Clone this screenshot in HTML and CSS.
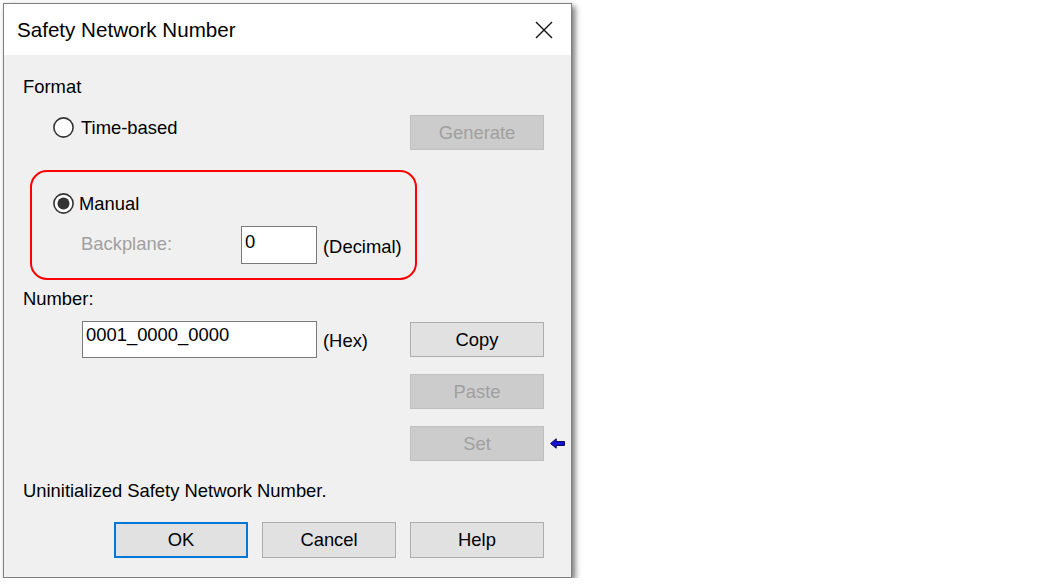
FILE: index.html
```html
<!DOCTYPE html>
<html lang="en">
<head>
    <meta charset="UTF-8">
    <meta name="viewport" content="width=device-width, initial-scale=1.0">
    <title>Safety Network Number</title>
    <link rel="stylesheet" href="styles.css">
</head>
<body>
    <div class="dialog">
        <div class="titlebar">
            <span class="title">Safety Network Number</span>
            <svg class="close" viewBox="0 0 18 18">
                <path d="M1 1 L17 17 M17 1 L1 17" stroke="#111" stroke-width="1.4" fill="none"/>
            </svg>
        </div>

        <div class="content">
            <div class="label">Format</div>

            <div class="time-row">
                <label class="radio">
                    <svg class="radio-icon" viewBox="0 0 21 21">
                        <circle cx="10.5" cy="10.5" r="9.6" fill="#fff" stroke="#333" stroke-width="1.6"/>
                    </svg>
                    Time-based
                </label>
                <button class="btn" disabled>Generate</button>
            </div>

            <div class="manual-box">
                <label class="radio">
                    <svg class="radio-icon" viewBox="0 0 21 21">
                        <circle cx="10.5" cy="10.5" r="9.6" fill="#fff" stroke="#333" stroke-width="1.6"/>
                        <circle cx="10.5" cy="10.5" r="6" fill="#333"/>
                    </svg>
                    Manual
                </label>
                <div class="backplane-row">
                    <span class="muted">Backplane:</span>
                    <div class="textbox small">0</div>
                    <span class="unit decimal">(Decimal)</span>
                </div>
            </div>

            <div class="label number-label">Number:</div>

            <div class="number-row">
                <div class="textbox wide">0001_0000_0000</div>
                <span class="unit hex">(Hex)</span>
                <div class="btn-stack">
                    <button class="btn">Copy</button>
                    <button class="btn" disabled>Paste</button>
                    <div class="set-wrap">
                        <button class="btn" disabled>Set</button>
                        <svg class="pointer" viewBox="0 0 14 10">
                            <path d="M0.5 5 L5.8 0.6 L5.8 3.2 L13.5 3.2 L13.5 6.8 L5.8 6.8 L5.8 9.4 Z" fill="#1414d8" stroke="#00004a" stroke-width="0.9"/>
                        </svg>
                    </div>
                </div>
            </div>

            <div class="status">Uninitialized Safety Network Number.</div>

            <div class="actions">
                <button class="btn default">OK</button>
                <button class="btn">Cancel</button>
                <button class="btn">Help</button>
            </div>
        </div>
    </div>
</body>
</html>
```

FILE: styles.css
```css
body {
    margin: 0;
    background: #fff;
    font-family: "Liberation Sans", Arial, sans-serif;
    font-size: 18.4px;
    color: #000;
}

.dialog {
    margin: 3px 0 0 3px;
    width: 569px;
    height: 575px;
    box-sizing: border-box;
    border: 1px solid #7f7f7f;
    background: #f0f0f0;
    box-shadow: 3px 3px 6px rgba(0, 0, 0, 0.55);
    display: flex;
    flex-direction: column;
}

.titlebar {
    height: 51px;
    flex: none;
    background: #fff;
    display: flex;
    align-items: center;
    justify-content: space-between;
    padding: 0 18px 0 13px;
}

.title {
    font-size: 20.6px;
}

.close {
    width: 18px;
    height: 18px;
}

.content {
    flex: 1;
    padding: 22px 27px 0 19px;
}

.label {
    line-height: 20px;
}

.radio {
    display: flex;
    align-items: center;
    gap: 7px;
    line-height: 20px;
}

.radio-icon {
    width: 21px;
    height: 21px;
}

.time-row {
    margin-top: 18px;
    display: flex;
    align-items: flex-start;
    height: 35px;
}

.time-row .radio {
    margin: 2px 0 0 30px;
}

.time-row .btn {
    margin-left: auto;
}

.btn {
    width: 134px;
    height: 35px;
    padding: 0;
    font: inherit;
    color: #000;
    background: #e1e1e1;
    border: 1px solid #adadad;
}

.btn:disabled {
    background: #cccccc;
    border-color: #bfbfbf;
    color: #a0a0a0;
}

.manual-box {
    margin: 20px 0 0 7px;
    width: 387px;
    height: 110px;
    box-sizing: border-box;
    border: 2px solid #ff0000;
    border-radius: 17px;
    padding: 21px 0 0 21px;
}

.manual-box .radio {
    gap: 5px;
}

.backplane-row {
    display: flex;
    align-items: flex-start;
    margin-top: 12px;
}

.muted {
    color: #a0a0a0;
    width: 160px;
    margin: 8px 0 0 28px;
    line-height: 20px;
}

.textbox {
    box-sizing: border-box;
    background: #fff;
    border: 1px solid #7a7a7a;
    line-height: 20px;
    padding: 5px 3px 0;
}

.textbox.small {
    width: 76px;
    height: 38px;
}

.textbox.wide {
    width: 235px;
    height: 37px;
    margin-left: 59px;
    padding-top: 3px;
}

.unit {
    margin-left: 6px;
    line-height: 20px;
}

.unit.decimal {
    margin-top: 11px;
}

.unit.hex {
    margin-top: 10px;
}

.number-label {
    margin-top: 9px;
}

.number-row {
    margin-top: 12px;
    display: flex;
    align-items: flex-start;
}

.btn-stack {
    margin: 1px 0 0 auto;
    display: flex;
    flex-direction: column;
    gap: 17px;
}

.set-wrap {
    position: relative;
    height: 35px;
}

.pointer {
    position: absolute;
    left: 140px;
    top: 12px;
    width: 15px;
    height: 11px;
}

.status {
    margin-top: 20px;
    line-height: 20px;
}

.actions {
    margin-top: 21px;
    display: flex;
    justify-content: flex-end;
    gap: 14px;
}

.actions .btn {
    height: 36px;
}

.btn.default {
    border: 2px solid #0078d7;
}
```
